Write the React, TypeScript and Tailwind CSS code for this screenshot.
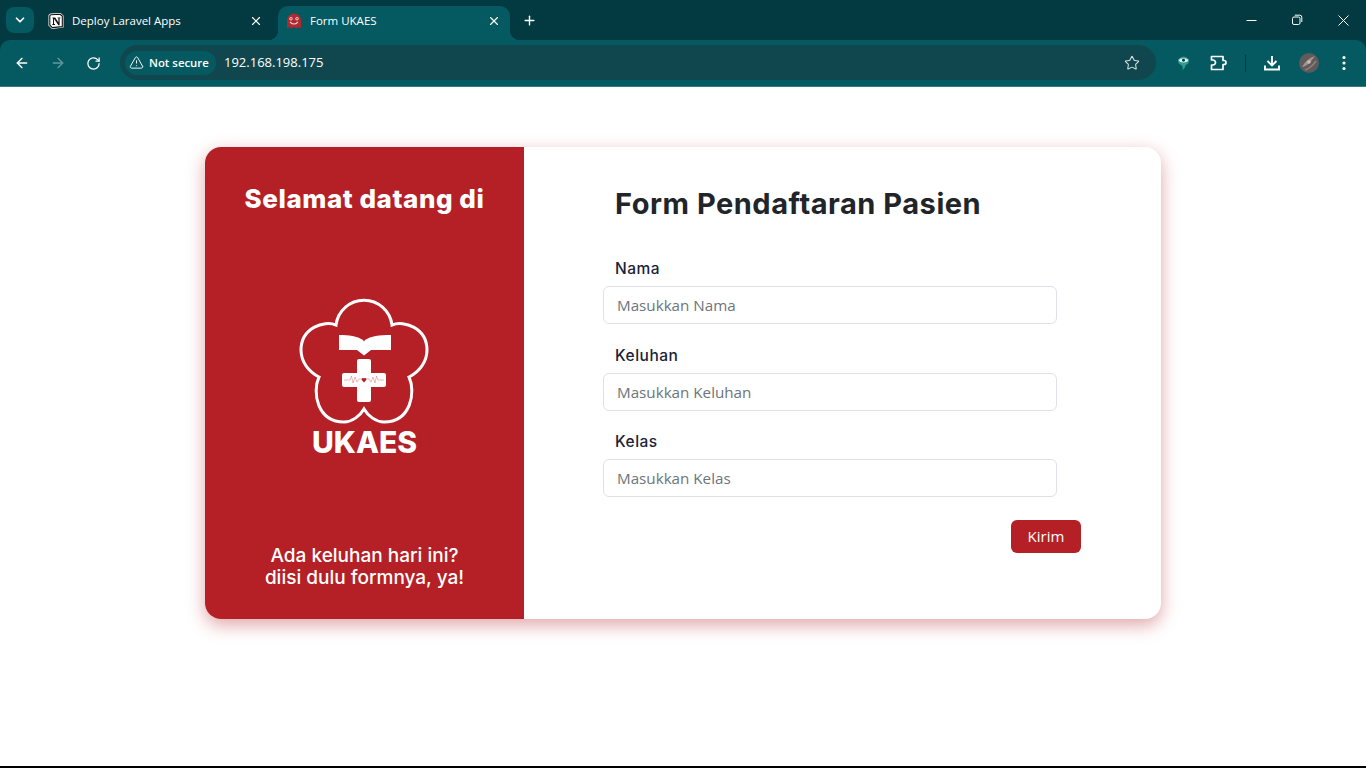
import { ArrowLeft, ArrowRight, ChevronDown, Plus, RotateCw, Star, TriangleAlert, X } from "lucide-react";

const chromeFont = "font-['Open_Sans',sans-serif]";
const headFont = "font-['Inter',sans-serif]";

function NotionIcon() {
  return (
    <svg width="16" height="16" viewBox="0 0 16 16">
      <path d="M2.5 0.5 L12.5 0 L15.5 2.5 V14.5 L4 16 L0.5 12.5 V2 Z" fill="#fff" />
      <path d="M3 1.8 L12 1.2 L14.3 3 V13.6 L4.3 14.6 L1.8 12 V2.6 Z" fill="#fff" stroke="#111" strokeWidth="1.1" strokeLinejoin="round" />
      <path d="M4.4 4.4 H7.2 L10.4 9.4 V5.2 H9.6 V4.4 H12.4 V5.2 H11.6 V12.2 H10.4 L6 5.8 V11 H7 V11.9 H4.4 V11 H5 V5.2 H4.4 Z" fill="#111" />
    </svg>
  );
}

function GhostIcon() {
  return (
    <svg width="16" height="16" viewBox="0 0 16 16">
      <path d="M1 15.5 V7.5 A7 7 0 0 1 15 7.5 V15.5 L12.5 14 L10.5 15.5 L8 14 L5.5 15.5 L3.5 14 Z" fill="#ad2a30" />
      <circle cx="5" cy="5.8" r="1.7" fill="#f3c9cb" />
      <circle cx="11" cy="5.8" r="1.7" fill="#f3c9cb" />
      <circle cx="5" cy="5.8" r="0.8" fill="#ad2a30" />
      <circle cx="11" cy="5.8" r="0.8" fill="#ad2a30" />
      <path d="M4 9 Q8 13 12 9" fill="none" stroke="#f3c9cb" strokeWidth="1.1" />
    </svg>
  );
}

function MinimizeIcon() {
  return (
    <svg width="11" height="11" viewBox="0 0 11 11" fill="none" stroke="#fff" strokeWidth="1">
      <path d="M0.5 5.5 H10.5" />
    </svg>
  );
}

function RestoreIcon() {
  return (
    <svg width="12" height="12" viewBox="0 0 12 12" fill="none" stroke="#fff" strokeWidth="1">
      <rect x="1.5" y="3" width="7.5" height="7.5" rx="1.5" />
      <path d="M3.8 1.2 H8.8 A2 2 0 0 1 10.8 3.2 V8" />
    </svg>
  );
}

function CloseIcon() {
  return (
    <svg width="11" height="11" viewBox="0 0 11 11" fill="none" stroke="#fff" strokeWidth="1">
      <path d="M0.5 0.5 L10.5 10.5 M10.5 0.5 L0.5 10.5" />
    </svg>
  );
}

function ExtensionIcon() {
  return (
    <svg width="13" height="16" viewBox="0 0 12 15">
      <path d="M1 4 Q6 -1 11 4 Q12 8 8 9.5 Q7.5 12.5 5 14.5 Q5.8 11.5 4.5 9.8 Q0 8 1 4 Z" fill="#2f9b92" />
      <ellipse cx="6" cy="5" rx="4.2" ry="2" fill="#dff3ef" />
      <circle cx="6" cy="5" r="1.4" fill="#17383b" />
    </svg>
  );
}

function PuzzleIcon() {
  return (
    <svg width="17" height="16" viewBox="0 0 17 16" fill="none" stroke="#fff" strokeWidth="1.7" strokeLinejoin="round">
      <path d="M1.5 1.5 H13 V5.5 H14 A2 2 0 0 1 14 9.5 H13 V14.5 H1.5 V10 H3 A2.5 2.5 0 0 0 3 5 H1.5 Z" />
    </svg>
  );
}

function DownloadIcon() {
  return (
    <svg width="16" height="16" viewBox="0 0 16 16" fill="none" stroke="#fff" strokeWidth="1.9">
      <path d="M8 1 V10.5 M3.5 6 L8 10.5 L12.5 6 M1 10.5 V14.5 H15 V10.5" />
    </svg>
  );
}

function AvatarIcon() {
  return (
    <svg width="20" height="20" viewBox="0 0 20 20">
      <circle cx="10" cy="10" r="10" fill="#5f5a5b" />
      <path d="M3 14 Q7 6 16 3 Q12 9 8 12 Q5 14 3 14 Z" fill="#a69491" />
      <path d="M6 17 Q12 15 17 8" fill="none" stroke="#8b7f7f" strokeWidth="1.6" />
      <circle cx="10" cy="9" r="1.8" fill="#cdbcb4" />
    </svg>
  );
}

function MenuDots() {
  return (
    <svg width="16" height="16" viewBox="0 0 16 16" fill="#fff">
      <circle cx="8" cy="2.5" r="1.6" />
      <circle cx="8" cy="8" r="1.6" />
      <circle cx="8" cy="13.5" r="1.6" />
    </svg>
  );
}

function Tab({ icon, title, active }: { icon: React.ReactNode; title: string; active?: boolean }) {
  return (
    <div className={`relative flex h-[34px] w-[232px] items-center rounded-t-[10px] pb-[5px] pl-[8px] pr-[9px] ${active ? "bg-[#055a61]" : ""}`}>
      {active && (
        <>
          <div className="absolute bottom-0 left-[-10px] h-[10px] w-[10px] bg-[radial-gradient(circle_at_0_0,#033a42_10px,#055a61_10.5px)]" />
          <div className="absolute bottom-0 right-[-10px] h-[10px] w-[10px] bg-[radial-gradient(circle_at_100%_0,#033a42_10px,#055a61_10.5px)]" />
        </>
      )}
      <span className="flex w-[16px] justify-center">{icon}</span>
      <span className="ml-[8px] flex-1 text-[11.5px] text-white">{title}</span>
      <X size={14} color="#fff" strokeWidth={2} />
    </div>
  );
}

function LogoMark() {
  return (
    <svg width="160" height="136" viewBox="0 0 160 136" className="ml-[-1px] block">
      <path
        d="M52 35 A28.2 28.2 0 0 1 108 35 C120 30 143 38 143 60 C143 72 135 82 125 87 C132 102 127 132 100 132 C92 132 84 126 80 119 C76 126 68 132 60 132 C33 132 28 102 35 87 C25 82 17 72 17 60 C17 38 40 30 52 35 Z"
        fill="none"
        stroke="#fff"
        strokeWidth="3"
      />
      <path d="M55 45 C65 45 73 46 79 50 L80 51.5 L81 50 C87 46 95 45 107 45 V60 H87 L80 65.5 L73 60 H55 Z" fill="#fff" />
      <rect x="73" y="69" width="14" height="43" rx="2" fill="#fff" />
      <rect x="58" y="83" width="44" height="14" rx="2" fill="#fff" />
      <path d="M60 90 H66 L67.5 86 L69 93 L71 87 L73 92 L75 89 H85 L87 92 L89 87 L91 93 L92.5 86 L94 90 H100" fill="none" stroke="#cf4a4f" strokeWidth="0.4" />
      <path d="M80 92.5 L77.8 90 A1.3 1.3 0 0 1 80 88.6 A1.3 1.3 0 0 1 82.2 90 Z" fill="#b52026" />
    </svg>
  );
}

function Field({ label, placeholder, mt }: { label: string; placeholder: string; mt: string }) {
  return (
    <div className={mt}>
      <label className={`block h-[24px] pl-[12px] text-[15.5px] font-medium leading-[24px] tracking-[0.5px] text-[#1b2238] ${headFont}`}>{label}</label>
      <input
        placeholder={placeholder}
        className="mt-[5px] block h-[38px] w-[454px] rounded-[6px] border border-[#dee2e6] bg-white px-[13px] font-['Open_Sans',sans-serif] text-[15.2px] outline-none placeholder:text-[#6c757d] placeholder:opacity-100"
      />
    </div>
  );
}

export default function App() {
  return (
    <div className="flex h-screen flex-col overflow-hidden bg-white">
      {/* browser chrome */}
      <div className={`bg-[#033a42] ${chromeFont}`}>
        <div className="flex h-[40px] items-end pl-[6px]">
          <div className="mb-[7px] flex h-[26px] w-[28px] items-center justify-center rounded-[8px] bg-[#055a61]">
            <ChevronDown size={14} color="#fff" strokeWidth={3} />
          </div>
          <div className="ml-[2px] flex w-[474px] items-end justify-between pl-[4px]">
            <Tab icon={<NotionIcon />} title="Deploy Laravel Apps" />
            <Tab icon={<GhostIcon />} title="Form UKAES" active />
          </div>
          <div className="mb-[12px] ml-[12px] flex">
            <Plus size={15} color="#fff" strokeWidth={2.2} />
          </div>
          <div className="ml-auto flex h-[40px] items-center self-start">
            <span className="flex w-[46px] justify-center">
              <MinimizeIcon />
            </span>
            <span className="flex w-[46px] justify-center">
              <RestoreIcon />
            </span>
            <span className="flex w-[46px] justify-center">
              <CloseIcon />
            </span>
          </div>
        </div>
        <div className="flex h-[47px] items-center rounded-t-[10px] border-b border-[#2d7d82] bg-[#055a61] pl-[14px] pr-[14px]">
          <ArrowLeft size={16} color="#fff" strokeWidth={2} />
          <ArrowRight size={16} color="#5f9a9e" strokeWidth={2} className="ml-[20px]" />
          <RotateCw size={15} color="#fff" strokeWidth={2} className="ml-[20px]" />
          <div className="mb-[1px] ml-[19px] flex h-[35px] flex-1 items-center rounded-full bg-[#10474f] pl-[5px] pr-[16px]">
            <div className="flex h-[24px] w-[91px] items-center rounded-full bg-[#055a61] pl-[4px]">
              <TriangleAlert size={15} color="#fff" strokeWidth={1.5} />
              <span className="ml-[5px] text-[11.4px] font-semibold text-white">Not secure</span>
            </div>
            <span className="ml-[8px] text-[13px] text-white">192.168.198.175</span>
            <Star size={16} color="#d5dfe0" strokeWidth={1.6} className="ml-auto" />
          </div>
          <div className="ml-[17px] flex w-[20px] justify-center">
            <ExtensionIcon />
          </div>
          <div className="ml-[16px] flex w-[18px] justify-center">
            <PuzzleIcon />
          </div>
          <div className="ml-[18px] h-[17px] w-px bg-[#033a42]" />
          <div className="ml-[17px] flex w-[18px] justify-center">
            <DownloadIcon />
          </div>
          <div className="ml-[18px]">
            <AvatarIcon />
          </div>
          <div className="ml-[17px]">
            <MenuDots />
          </div>
        </div>
      </div>

      {/* page */}
      <div className="flex flex-1 justify-center pt-[60px]">
        <div className="flex h-[472px] w-[956px] rounded-[16px] bg-white shadow-[0_6px_18px_rgba(181,32,38,0.4)]">
          <div className="flex w-[319px] flex-col items-center rounded-l-[16px] bg-[#b52026] pb-[30px] pt-[36px] text-white">
            <h2 className={`text-[26px] font-extrabold leading-[32px] tracking-[0.55px] ${headFont}`}>Selamat datang di</h2>
            <div className="mt-[75px] flex flex-col items-center">
              <LogoMark />
              <span className={`mt-[-2px] text-[30px] font-extrabold leading-[36px] ${headFont}`}>UKAES</span>
            </div>
            <p className={`mt-auto text-center text-[19px] font-medium leading-[22px] ${headFont}`}>
              Ada keluhan hari ini?
              <br />
              diisi dulu formnya, ya!
            </p>
          </div>
          <div className="flex-1 pl-[79px] pt-[38px]">
            <h1 className={`pl-[12px] text-[29px] font-bold leading-[38px] tracking-[0.52px] text-[#212529] ${headFont}`}>Form Pendaftaran Pasien</h1>
            <Field label="Nama" placeholder="Masukkan Nama" mt="mt-[34px]" />
            <Field label="Keluhan" placeholder="Masukkan Keluhan" mt="mt-[20px]" />
            <Field label="Kelas" placeholder="Masukkan Kelas" mt="mt-[19px]" />
            <div className="mt-[23px] flex w-[478px] justify-end">
              <button className="h-[33px] w-[70px] rounded-[6px] bg-[#b52026] font-['Open_Sans',sans-serif] text-[15px] text-white">Kirim</button>
            </div>
          </div>
        </div>
      </div>
      <div className="h-[2px] bg-black" />
    </div>
  );
}
